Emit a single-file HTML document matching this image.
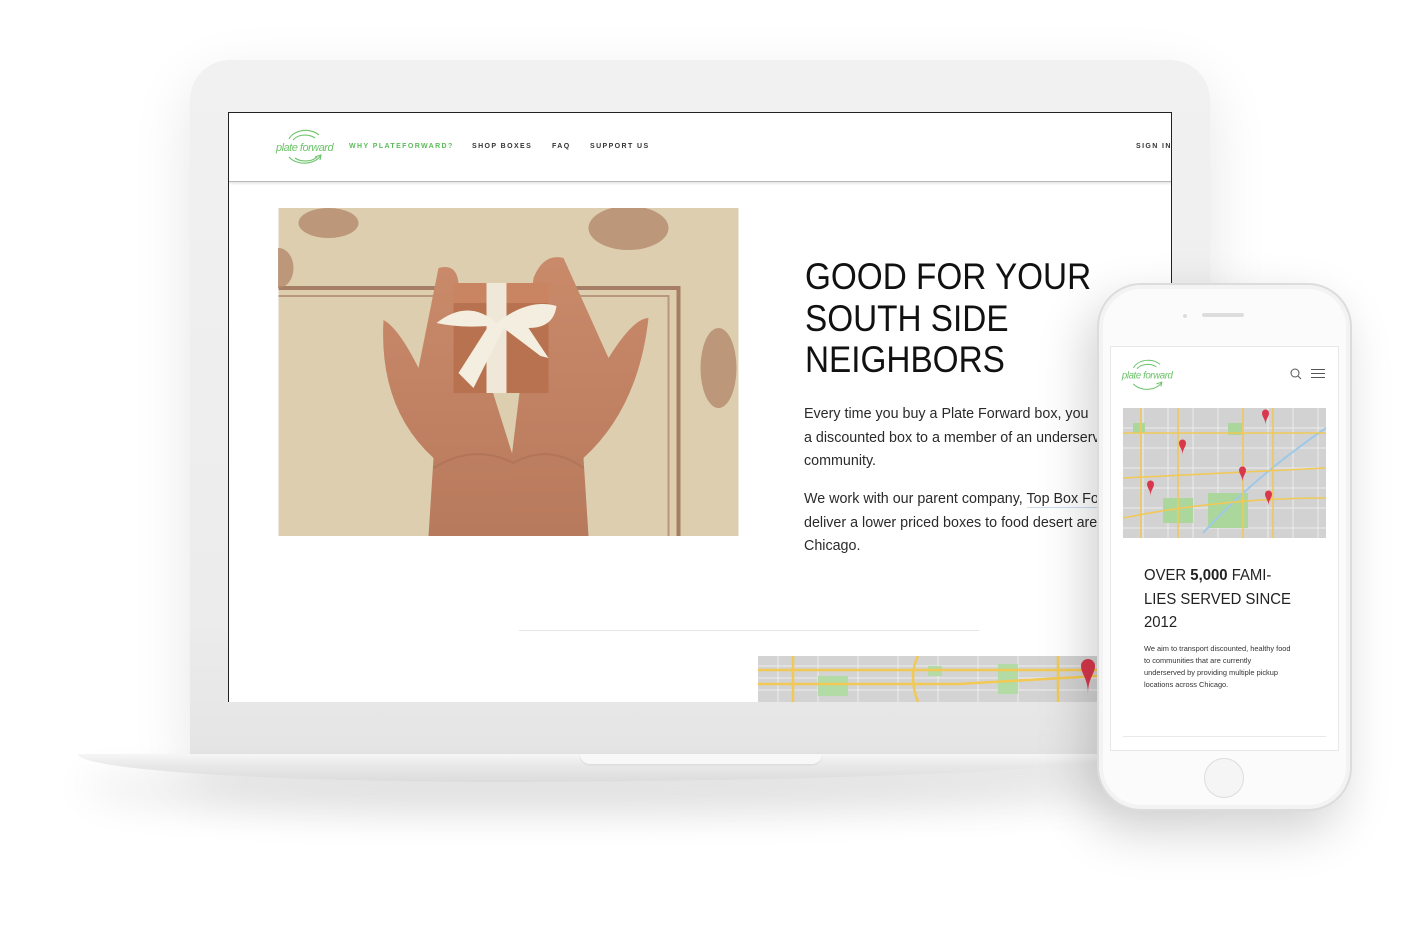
<!DOCTYPE html>
<html><head><meta charset="utf-8"><style>
*{margin:0;padding:0;box-sizing:border-box}
body{width:1418px;height:940px;background:#fff;position:relative;overflow:hidden;font-family:"Liberation Sans",sans-serif}
.abs{position:absolute}
.lap{left:190px;top:60px;width:1020px;height:700px;background:linear-gradient(#f1f1f1,#ececec 80%,#e4e4e4);border-radius:40px 40px 0 0;box-shadow:0 20px 60px rgba(0,0,0,.10)}
.screen{left:228px;top:112px;width:944px;height:590px;background:#fff;border:1px solid #222;border-bottom:none;overflow:hidden}
.base{left:78px;top:754px;width:1040px;height:28px;background:linear-gradient(#f6f6f6,#e9e9e9 40%,#dcdcdc);border-radius:0 0 60% 40%/0 0 100% 100%;box-shadow:0 28px 40px rgba(0,0,0,.14)}
.notch{left:580px;top:754px;width:242px;height:10px;background:#f8f8f8;border-radius:0 0 20px 20px;box-shadow:0 1px 2px rgba(0,0,0,.08)}
.nav{position:absolute;left:0;top:0;width:944px;height:69px;border-bottom:1px solid #bbb;box-shadow:0 1px 3px rgba(0,0,0,.15)}
.nav span{position:absolute;top:30px;font-size:7px;letter-spacing:1.4px;color:#333;font-weight:bold;white-space:nowrap}
h1{position:absolute;left:576px;top:143px;font-size:37px;line-height:41.5px;font-weight:normal;color:#111;white-space:nowrap;transform:scaleX(.9);transform-origin:0 0}
.p{position:absolute;left:575px;font-size:14.3px;line-height:23.7px;color:#2a2a2a;white-space:nowrap}
.phone{left:1097px;top:283px;width:255px;height:528px;border-radius:44px;background:#fbfbfb;border:2px solid #dcdcdc;box-shadow:-10px 20px 50px rgba(0,0,0,.18),inset 0 0 0 4px #f3f3f3}
.pscreen{left:1110px;top:346px;width:229px;height:405px;background:#fff;border:1px solid #e8e8e8;overflow:hidden}
</style></head><body>
<div class="abs lap"></div>
<div class="abs screen">
 <div class="nav">
  <svg class="abs" style="left:46px;top:12px" width="62" height="44" viewBox="0 0 62 44"><g fill="none" stroke="#6cc36a" stroke-width="1.1"><path d="M14 14 A18 14 0 0 1 44 10"/><path d="M18 15 A14 10 0 0 1 40 13"/><path d="M46 30 A18 13 0 0 1 14 32"/><path d="M40 32 l6 -2 l-1 5"/><path d="M42 32 A14 9 0 0 1 20 33"/></g><text x="1" y="26" font-size="11" fill="#6cc36a" font-family="Liberation Sans" font-style="italic" letter-spacing="-.5">plate forward</text></svg>
  <span style="left:120px;color:#5cbc5a">WHY PLATEFORWARD?</span>
  <span style="left:243px">SHOP BOXES</span>
  <span style="left:323px">FAQ</span>
  <span style="left:361px">SUPPORT US</span>
  <span style="left:907px">SIGN IN</span>
 </div>
 <svg class="abs" style="left:49px;top:95px" width="461" height="328" viewBox="0 0 460 328">
  <defs><linearGradient id="sk" x1="0" x2="0" y1="0" y2="1"><stop offset="0" stop-color="#c98a6a"/><stop offset="1" stop-color="#b87a5c"/></linearGradient></defs>
  <rect width="460" height="328" fill="#d9c8a9"/>
  <rect width="460" height="328" fill="#e2d3b8" opacity=".5"/>
  <path d="M0 80 H400 V328" fill="none" stroke="#a57e65" stroke-width="4"/>
  <path d="M0 88 H390 V328" fill="none" stroke="#b8977c" stroke-width="2"/>
  <g fill="#b48a6c" opacity=".8"><ellipse cx="50" cy="15" rx="30" ry="15"/><ellipse cx="350" cy="20" rx="40" ry="22"/><ellipse cx="440" cy="160" rx="18" ry="40"/><ellipse cx="0" cy="60" rx="15" ry="20"/></g>
  <path d="M150 328 L155 250 Q100 200 105 112 Q120 120 140 160 L160 60 Q178 55 180 75 L235 250 L235 328Z" fill="url(#sk)"/>
  <path d="M310 328 L305 250 Q360 200 370 110 Q355 110 330 150 L285 50 Q265 45 255 70 L233 250 L233 328Z" fill="url(#sk)"/>
  <path d="M155 260 Q195 235 235 255 Q270 235 305 260" fill="none" stroke="#a86c50" stroke-width="2" opacity=".5"/>
  <rect x="175" y="75" width="95" height="110" fill="#b9724f"/>
  <rect x="175" y="75" width="95" height="20" fill="#c98461"/>
  <path d="M208 75 h20 v110 h-20z" fill="#efe8d8"/>
  <path d="M158 115 Q190 90 218 115 Q250 90 278 98 Q275 120 250 120 L270 150 L262 148 L225 120 L195 180 L180 165 L210 118 Q180 120 158 115Z" fill="#f3eedf"/>
 </svg>
 <h1>GOOD FOR YOUR<br>SOUTH SIDE<br>NEIGHBORS</h1>
 <div class="p" style="top:290px">Every time you buy a Plate Forward box, you<br>a discounted box to a member of an underserved<br>community.</div>
 <div class="p" style="top:375px">We work with our parent company, <span style="border-bottom:1px solid #cde">Top Box Foods</span>, to<br>deliver a lower priced boxes to food desert areas<br>Chicago.</div>
 <div class="abs" style="left:290px;top:517px;width:460px;height:1px;background:#e6e6e6"></div>
 <svg class="abs" style="left:529px;top:543px" width="340" height="46" viewBox="0 0 340 46"><rect width="340" height="46" fill="#d3d3d3"/><g stroke="#eee" stroke-width="1"><path d="M0 10H340M0 22H340M0 34H340M20 0V46M60 0V46M100 0V46M140 0V46M180 0V46M220 0V46M260 0V46M300 0V46"/></g><g fill="#b3dba5"><rect x="60" y="20" width="30" height="20"/><rect x="240" y="8" width="20" height="30"/><rect x="170" y="10" width="14" height="10"/></g><g stroke="#f2c955" stroke-width="2.5" fill="none"><path d="M0 14H340"/><path d="M0 28H200L340 20"/><path d="M35 0V46"/><path d="M160 0Q150 20 160 46"/><path d="M300 0V46"/></g><path d="M323 10a7 7 0 0 1 14 0c0 8-7 12-7 28c0-16-7-20-7-28z" fill="#d9374c"/></svg>
</div>
<div class="abs base"></div>
<div class="abs notch"></div>
<div class="abs phone"></div>
<div class="abs" style="left:1183px;top:314px;width:4px;height:4px;border-radius:2px;background:#ddd"></div>
<div class="abs" style="left:1202px;top:313px;width:42px;height:4px;border-radius:2px;background:#ddd"></div>
<div class="abs" style="left:1204px;top:758px;width:40px;height:40px;border-radius:50%;background:#f5f5f5;border:1px solid #ddd"></div>
<div class="abs pscreen">
 <svg class="abs" style="left:10px;top:8px" width="55" height="40" viewBox="0 0 62 44"><g fill="none" stroke="#6cc36a" stroke-width="1.1"><path d="M14 14 A18 14 0 0 1 44 10"/><path d="M18 15 A14 10 0 0 1 40 13"/><path d="M46 30 A18 13 0 0 1 14 32"/><path d="M40 32 l6 -2 l-1 5"/></g><text x="1" y="26" font-size="11" fill="#6cc36a" font-family="Liberation Sans" font-style="italic" letter-spacing="-.5">plate forward</text></svg>
 <svg class="abs" style="left:178px;top:20px" width="40" height="14"><circle cx="6" cy="6" r="4" fill="none" stroke="#555" stroke-width="1"/><path d="M9 9l3 3" stroke="#555"/><path d="M22 2.5h14M22 6.5h14M22 10.5h14" stroke="#555" stroke-width="1"/></svg>
 <svg class="abs" style="left:12px;top:61px" width="203" height="130" viewBox="0 0 203 130"><rect width="203" height="130" fill="#d2d2d2"/><g stroke="#ececec"><path d="M0 20H203M0 40H203M0 60H203M0 80H203M0 100H203M0 120H203M20 0V130M45 0V130M70 0V130M95 0V130M120 0V130M145 0V130M170 0V130M195 0V130"/></g><g fill="#abd69c"><rect x="40" y="90" width="30" height="25"/><rect x="85" y="85" width="40" height="35"/><rect x="10" y="15" width="12" height="10"/><rect x="105" y="15" width="14" height="12"/></g><path d="M80 125Q130 70 203 20" stroke="#9ec9e8" stroke-width="2" fill="none"/><g stroke="#f0c958" stroke-width="1.6" fill="none"><path d="M0 25H203M0 70L203 60M0 110Q100 90 203 90M55 0V130M120 0V130M150 0V130M18 0V130"/></g><g fill="#d9374c"><path d="M139 5a3.5 3.5 0 0 1 7 0c0 4-3.5 6-3.5 12c0-6-3.5-8-3.5-12z"/><path d="M56 35a3.5 3.5 0 0 1 7 0c0 4-3.5 6-3.5 12c0-6-3.5-8-3.5-12z"/><path d="M116 62a3.5 3.5 0 0 1 7 0c0 4-3.5 6-3.5 12c0-6-3.5-8-3.5-12z"/><path d="M24 76a3.5 3.5 0 0 1 7 0c0 4-3.5 6-3.5 12c0-6-3.5-8-3.5-12z"/><path d="M142 86a3.5 3.5 0 0 1 7 0c0 4-3.5 6-3.5 12c0-6-3.5-8-3.5-12z"/></g></svg>
 <div class="abs" style="left:33px;top:217px;font-size:16px;line-height:23.5px;color:#222;white-space:nowrap;transform:scaleX(.93);transform-origin:0 0">OVER <b>5,000</b> FAMI-<br>LIES SERVED SINCE<br>2012</div>
 <div class="abs" style="left:33px;top:296px;font-size:7.4px;line-height:12px;color:#333;white-space:nowrap">We aim to transport discounted, healthy food<br>to communities that are currently<br>underserved by providing multiple pickup<br>locations across Chicago.</div>
 <div class="abs" style="left:12px;top:389px;width:203px;height:1px;background:#e8e8e8"></div>
</div>
</body></html>
